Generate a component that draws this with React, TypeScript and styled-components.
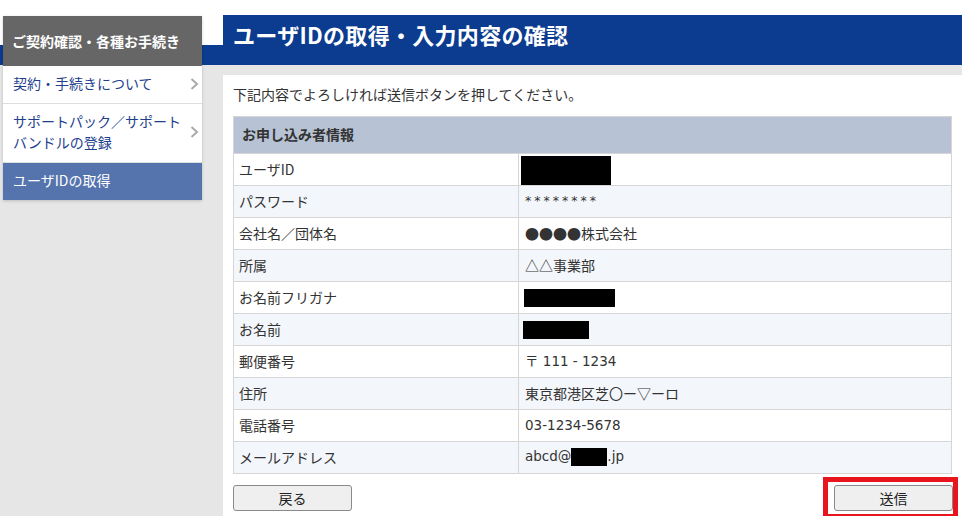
import React from 'react';
import styled, { createGlobalStyle } from 'styled-components';

const GlobalStyle = createGlobalStyle`
  html, body {
    margin: 0;
    padding: 0;
  }
  body {
    font-family: "Noto Sans CJK JP", "Liberation Sans", sans-serif;
    font-size: 14px;
    color: #333;
    background: #e6e6e6;
  }
`;

const Page = styled.div`
  display: flex;
  align-items: flex-start;
  min-height: 516px;
  background: linear-gradient(#fff 0 45px, #0c3c8f 45px 65px, #e6e6e6 65px);
`;

const Sidebar = styled.nav`
  flex: 0 0 199px;
  margin: 16px 0 0 3px;
  box-shadow: 0 1px 3px rgba(0, 0, 0, 0.18);
`;

const SideHeader = styled.div`
  height: 50px;
  display: flex;
  align-items: center;
  padding-left: 9px;
  background: #666;
  color: #fff;
  font-weight: bold;
  font-size: 14px;
  white-space: nowrap;
`;

const NavItem = styled.a<{ $active?: boolean }>`
  display: flex;
  align-items: center;
  justify-content: space-between;
  padding: 7px 3px 9px 10px;
  min-height: 21px;
  line-height: 21px;
  font-size: 14px;
  color: ${p => (p.$active ? '#fff' : '#1e3f8e')};
  background: ${p => (p.$active ? '#5574ae' : '#fff')};
  border-top: 1px solid #dedede;
  text-decoration: none;
  &:first-of-type {
    border-top: none;
  }
`;

const NavText = styled.span`
  white-space: nowrap;
`;

const Chevron = () => (
  <svg width="9" height="12" viewBox="0 0 9 12">
    <path d="M1.5 1 L7 6 L1.5 11" fill="none" stroke="#ababab" strokeWidth="2" />
  </svg>
);

const Main = styled.main`
  flex: 1;
  margin: 15px 0 0 21px;
`;

const TitleBar = styled.h1`
  margin: 0 0 10px;
  height: 50px;
  box-sizing: border-box;
  padding: 3px 0 0 10px;
  line-height: 32px;
  background: #0c3c8f;
  color: #fff;
  font-size: 22px;
  font-weight: bold;
  letter-spacing: 0.3px;
`;

const Panel = styled.section`
  background: #fff;
  padding: 10px 10px 0 10px;
  min-height: 430px;
`;

const Lead = styled.p`
  margin: 0 0 13px;
  line-height: 18px;
`;

const Table = styled.table`
  width: 719px;
  border-collapse: collapse;
  border: 1px solid #d6d6d6;
`;

const HeadCell = styled.th`
  height: 34px;
  padding: 0 8px 2px;
  line-height: 18px;
  text-align: left;
  background: #b7c3d4;
  font-weight: bold;
  color: #333;
`;

const Row = styled.tr`
  &:nth-child(even) {
    background: #f3f6fa;
  }
`;

const Label = styled.td`
  width: 279px;
  height: 29px;
  padding: 0 0 2px 5px;
  line-height: 18px;
  border: 1px solid #d6d6d6;
  color: #333;
`;

const Value = styled.td<{ $latin?: boolean }>`
  padding: 0 0 2px 6px;
  line-height: 18px;
  border: 1px solid #d6d6d6;
  color: #333;
  font-family: ${p =>
    p.$latin
      ? '"DejaVu Sans", "Noto Sans CJK JP", sans-serif'
      : '"Noto Sans CJK JP", "Liberation Sans", sans-serif'};
  font-size: ${p => (p.$latin ? '13.5px' : '14px')};
`;

const Stars = styled.span`
  letter-spacing: 3px;
  font-size: 12.5px;
`;

const Redact = styled.span<{ $w: number; $h?: number }>`
  display: inline-block;
  vertical-align: middle;
  width: ${p => p.$w}px;
  height: ${p => p.$h ?? 18}px;
  background: #000;
`;

const TallRedact = styled(Redact)`
  display: block;
  margin: 2px 0 -2px -4px;
`;

const Buttons = styled.div`
  display: flex;
  justify-content: space-between;
  align-items: flex-start;
  margin-top: 3px;
  width: 725px;
`;

const Button = styled.button`
  width: 119px;
  height: 26px;
  margin-top: 8px;
  background: #efefef;
  border: 1px solid #8a8a8a;
  border-radius: 3px;
  font-family: inherit;
  font-size: 14px;
  color: #222;
`;

const Highlight = styled.div`
  border: 5px solid #e8151f;
  padding: 3px 0 3px 6px;
  & > button {
    margin-top: 0;
  }
`;

type Item = { label: string; value: React.ReactNode; latin?: boolean };

const rows: Item[] = [
  { label: 'ユーザID', value: <TallRedact $w={90} $h={29} /> },
  { label: 'パスワード', value: <Stars>********</Stars>, latin: true },
  { label: '会社名／団体名', value: '●●●●株式会社' },
  { label: '所属', value: '△△事業部' },
  { label: 'お名前フリガナ', value: <Redact $w={91} style={{ marginLeft: -1 }} /> },
  { label: 'お名前', value: <Redact $w={66} style={{ marginLeft: -2 }} /> },
  { label: '郵便番号', value: '〒 111 - 1234', latin: true },
  { label: '住所', value: '東京都港区芝〇ー▽ーロ' },
  { label: '電話番号', value: '03-1234-5678', latin: true },
  { label: 'メールアドレス', value: <>abcd@<Redact $w={36} />.jp</>, latin: true },
];

export default function App() {
  return (
    <>
      <GlobalStyle />
      <Page>
        <Sidebar>
          <SideHeader>ご契約確認・各種お手続き</SideHeader>
          <NavItem href="#">
            <NavText>契約・手続きについて</NavText>
            <Chevron />
          </NavItem>
          <NavItem href="#">
            <NavText>サポートパック／サポート<br />バンドルの登録</NavText>
            <Chevron />
          </NavItem>
          <NavItem href="#" $active>
            <NavText>ユーザIDの取得</NavText>
          </NavItem>
        </Sidebar>
        <Main>
          <TitleBar>ユーザIDの取得・入力内容の確認</TitleBar>
          <Panel>
            <Lead>下記内容でよろしければ送信ボタンを押してください。</Lead>
            <Table>
              <thead>
                <tr>
                  <HeadCell colSpan={2}>お申し込み者情報</HeadCell>
                </tr>
              </thead>
              <tbody>
                {rows.map(r => (
                  <Row key={r.label}>
                    <Label>{r.label}</Label>
                    <Value $latin={r.latin}>{r.value}</Value>
                  </Row>
                ))}
              </tbody>
            </Table>
            <Buttons>
              <Button>戻る</Button>
              <Highlight>
                <Button>送信</Button>
              </Highlight>
            </Buttons>
          </Panel>
        </Main>
      </Page>
    </>
  );
}
